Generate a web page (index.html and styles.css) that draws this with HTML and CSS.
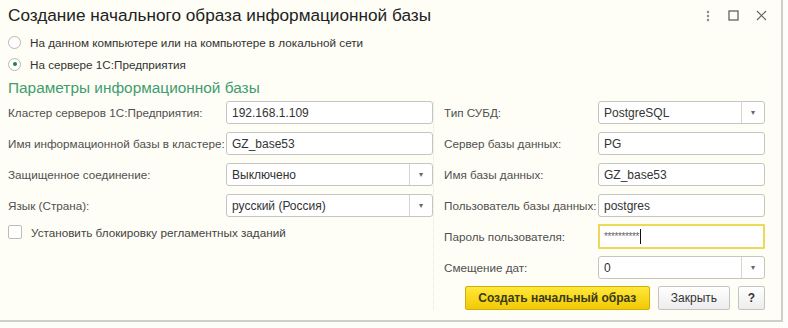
FILE: index.html
```html
<!DOCTYPE html>
<html lang="ru">
<head>
    <meta charset="UTF-8">
    <title>Создание начального образа информационной базы</title>
    <link rel="stylesheet" href="styles.css">
</head>
<body>

<div class="window">
    <!-- Заголовок окна -->
    <div class="titlebar">
        <div class="title">Создание начального образа информационной базы</div>
        <div class="wnd-buttons">
            <svg width="6" height="12" viewBox="0 0 6 12"><circle cx="3" cy="2" r="1.2" fill="#888"/><circle cx="3" cy="6" r="1.2" fill="#888"/><circle cx="3" cy="10" r="1.2" fill="#888"/></svg>
            <svg width="11" height="11" viewBox="0 0 11 11"><rect x="1" y="1" width="9" height="9" fill="none" stroke="#555" stroke-width="1.2"/></svg>
            <svg width="11" height="11" viewBox="0 0 11 11"><path d="M1 1 L10 10 M10 1 L1 10" stroke="#666" stroke-width="1.2"/></svg>
        </div>
    </div>

    <!-- Вариант размещения -->
    <div class="radio-row">
        <span class="radio"></span>
        <span>На данном компьютере или на компьютере в локальной сети</span>
    </div>
    <div class="radio-row">
        <span class="radio checked"></span>
        <span>На сервере 1С:Предприятия</span>
    </div>

    <div class="group-title">Параметры информационной базы</div>

    <div class="columns">
        <div class="col left">
            <div class="row">
                <label>Кластер серверов 1С:Предприятия:</label>
                <div class="field">192.168.1.109</div>
            </div>
            <div class="row">
                <label>Имя информационной базы в кластере:</label>
                <div class="field">GZ_base53</div>
            </div>
            <div class="row">
                <label>Защищенное соединение:</label>
                <div class="field select"><span class="value">Выключено</span><span class="drop">▾</span></div>
            </div>
            <div class="row">
                <label>Язык (Страна):</label>
                <div class="field select"><span class="value">русский (Россия)</span><span class="drop">▾</span></div>
            </div>
            <div class="check-row">
                <span class="checkbox"></span>
                <span>Установить блокировку регламентных заданий</span>
            </div>
        </div>

        <div class="col right">
            <div class="row">
                <label>Тип СУБД:</label>
                <div class="field select"><span class="value">PostgreSQL</span><span class="drop">▾</span></div>
            </div>
            <div class="row">
                <label>Сервер базы данных:</label>
                <div class="field">PG</div>
            </div>
            <div class="row">
                <label>Имя базы данных:</label>
                <div class="field">GZ_base53</div>
            </div>
            <div class="row">
                <label>Пользователь базы данных:</label>
                <div class="field">postgres</div>
            </div>
            <div class="row">
                <label>Пароль пользователя:</label>
                <div class="field active"><span class="stars">**********</span><span class="caret"></span></div>
            </div>
            <div class="row">
                <label>Смещение дат:</label>
                <div class="field select"><span class="value">0</span><span class="drop">▾</span></div>
            </div>
            <div class="buttons">
                <button class="btn primary">Создать начальный образ</button>
                <button class="btn">Закрыть</button>
                <button class="btn help">?</button>
            </div>
        </div>
    </div>
</div>

</body>
</html>
```

FILE: styles.css
```css
body {
    margin: 0;
    background-color: #fdfdfb;
    font-family: "Liberation Sans", Arial, sans-serif;
    font-size: 11.7px;
    color: #333;
}

.window {
    width: 783px;
    height: 322px;
    box-sizing: border-box;
    background-color: #fefef6;
    border-right: 2px solid #cfcfc8;
    border-bottom: 2px solid #cfcfc8;
    padding: 0 0 0 8px;
}

.titlebar {
    display: flex;
    align-items: center;
    height: 31px;
}

.title {
    flex: 1;
    font-size: 17.2px;
    color: #222;
}

.wnd-buttons {
    display: flex;
    align-items: center;
    gap: 17px;
    padding-right: 14px;
}

.radio-row {
    display: flex;
    align-items: center;
    height: 22px;
    gap: 9px;
}

.radio {
    width: 11px;
    height: 11px;
    border: 1px solid #b8b8b0;
    border-radius: 50%;
    background: #fff;
    position: relative;
}

.radio.checked::after {
    content: "";
    position: absolute;
    left: 3.5px;
    top: 3.5px;
    width: 4px;
    height: 4px;
    border-radius: 50%;
    background: #2d7a4a;
}

.group-title {
    color: #3f9d70;
    font-size: 15.4px;
    height: 20px;
    line-height: 20px;
    margin-top: 3px;
    margin-bottom: 3px;
}

.columns {
    display: flex;
    gap: 10px;
}

.col.left {
    width: 425px;
    border-right: 1px dotted #e4e4dc;
}

.col.right {
    width: 321px;
}

.row {
    display: flex;
    align-items: center;
    height: 23px;
    margin-bottom: 8px;
}

.row label {
    color: #505050;
    white-space: nowrap;
}

.left .row label {
    width: 218px;
}

.right .row label {
    width: 154px;
}

.field {
    flex: 1;
    height: 23px;
    box-sizing: border-box;
    border: 1px solid #c6c6c0;
    border-radius: 3px;
    background: #fff;
    padding: 0 5px;
    display: flex;
    align-items: center;
    color: #333;
    font-size: 12px;
}

.field.select {
    padding-right: 0;
}

.field .value {
    flex: 1;
}

.field .drop {
    width: 22px;
    height: 100%;
    border-left: 1px solid #d6d6d0;
    display: flex;
    align-items: center;
    justify-content: center;
    font-size: 8px;
    color: #666;
}

.field.active {
    height: 25px;
    margin-top: -1px;
    border: 2px solid #ecd95a;
    border-radius: 1px;
    padding-left: 4px;
}

.stars {
    font-size: 10px;
    color: #666;
    letter-spacing: -0.4px;
}

.caret {
    width: 1px;
    height: 15px;
    background: #111;
    margin-left: 1px;
}

.check-row {
    display: flex;
    align-items: center;
    gap: 9px;
    margin-top: 1px;
    color: #444;
}

.checkbox {
    width: 12px;
    height: 12px;
    border: 1px solid #bcbcb4;
    border-radius: 2px;
    background: #fff;
}

.buttons {
    display: flex;
    justify-content: flex-end;
    gap: 8px;
    margin-top: -1px;
}

.btn {
    height: 24px;
    font-family: "Liberation Sans", Arial, sans-serif;
    font-size: 12px;
    color: #333;
    background: linear-gradient(#ffffff, #ececec);
    border: 1px solid #c4c4c4;
    border-radius: 2px;
    padding: 0 12px;
}

.btn.primary {
    width: 185px;
    font-weight: bold;
    white-space: nowrap;
    background: linear-gradient(#ffe83a, #f3c904);
    border-color: #cfae12;
    color: #3a3a1a;
}

.btn.help {
    width: 27px;
    padding: 0;
    font-weight: bold;
}
```
